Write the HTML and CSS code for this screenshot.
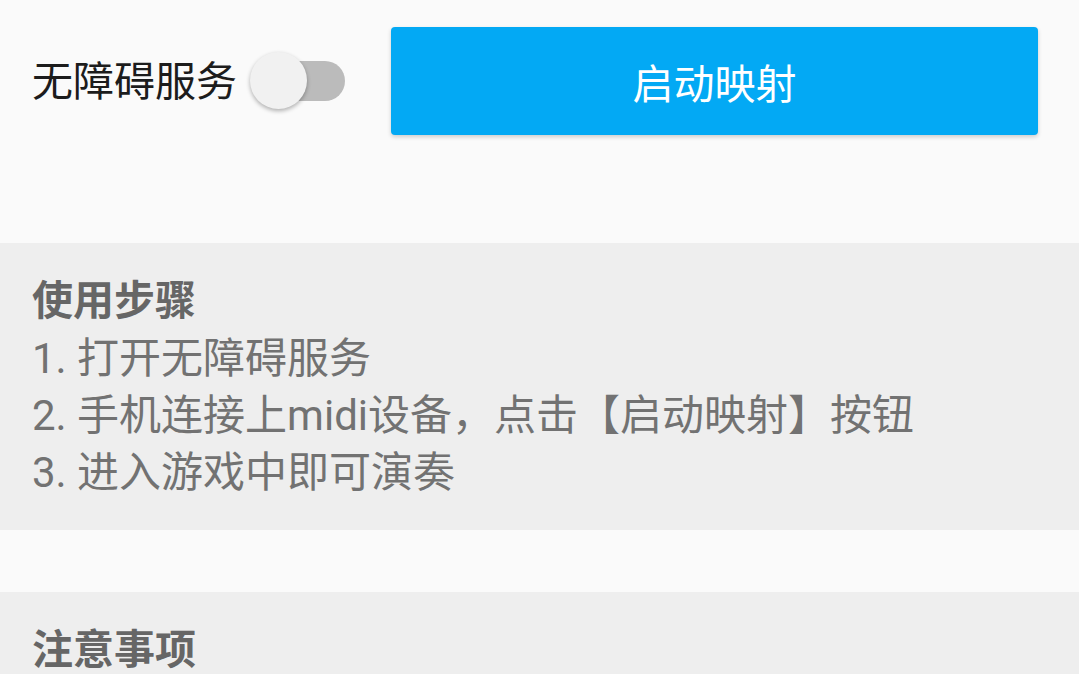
FILE: index.html
```html
<!DOCTYPE html>
<html lang="zh-CN">
<head>
  <meta charset="UTF-8" />
  <title>MIDI 映射</title>
  <link rel="stylesheet" href="styles.css">
</head>
<body>
  <div class="top">
    <span class="service-label">无障碍服务</span>
    <div class="switch">
      <div class="switch-track"></div>
      <div class="switch-thumb"></div>
    </div>
    <button class="start-btn">启动映射</button>
  </div>

  <div class="panel">
    <div class="panel-title">使用步骤</div>
    <div class="panel-line">1. 打开无障碍服务</div>
    <div class="panel-line">2. 手机连接上midi设备，点击【启动映射】按钮</div>
    <div class="panel-line">3. 进入游戏中即可演奏</div>
  </div>

  <div class="panel notes">
    <div class="panel-title">注意事项</div>
  </div>
</body>
</html>
```

FILE: styles.css
```css
html, body {
  overflow: hidden;
}

body {
  margin: 0;
  background-color: #fafafa;
  font-family: Roboto, "Noto Sans CJK SC", sans-serif;
  font-size: 41px;
  color: #212121;
}

.top {
  display: flex;
  align-items: center;
  padding: 27px 41px 108px 32px;
}

.service-label {
  line-height: 57px;
  margin-top: 3px;
  color: #1c1c1c;
}

.switch {
  position: relative;
  width: 95px;
  height: 60px;
  margin-left: 13px;
}

.switch-track {
  position: absolute;
  left: 8px;
  right: 0;
  top: 10px;
  height: 40px;
  border-radius: 20px;
  background-color: #bbbbbb;
}

.switch-thumb {
  position: absolute;
  left: 0;
  top: 1px;
  width: 57px;
  height: 57px;
  border-radius: 50%;
  background-color: #f1f1f1;
  box-shadow: 0 2px 4px rgba(0,0,0,0.3);
}

.start-btn {
  flex: 1;
  height: 108px;
  margin-left: 46px;
  border: none;
  border-radius: 4px;
  background-color: #03a9f4;
  color: #fff;
  font-family: Roboto, "Noto Sans CJK SC", sans-serif;
  font-size: 41px;
  box-shadow: 0 2px 4px rgba(0,0,0,0.18);
}

.panel {
  background-color: #eeeeee;
  padding: 30px 32px 29px;
  color: #727272;
  font-size: 42px;
  line-height: 57px;
}

.panel-title {
  font-weight: bold;
  font-size: 41px;
  color: #666;
}

.notes {
  margin-top: 62px;
}
```
